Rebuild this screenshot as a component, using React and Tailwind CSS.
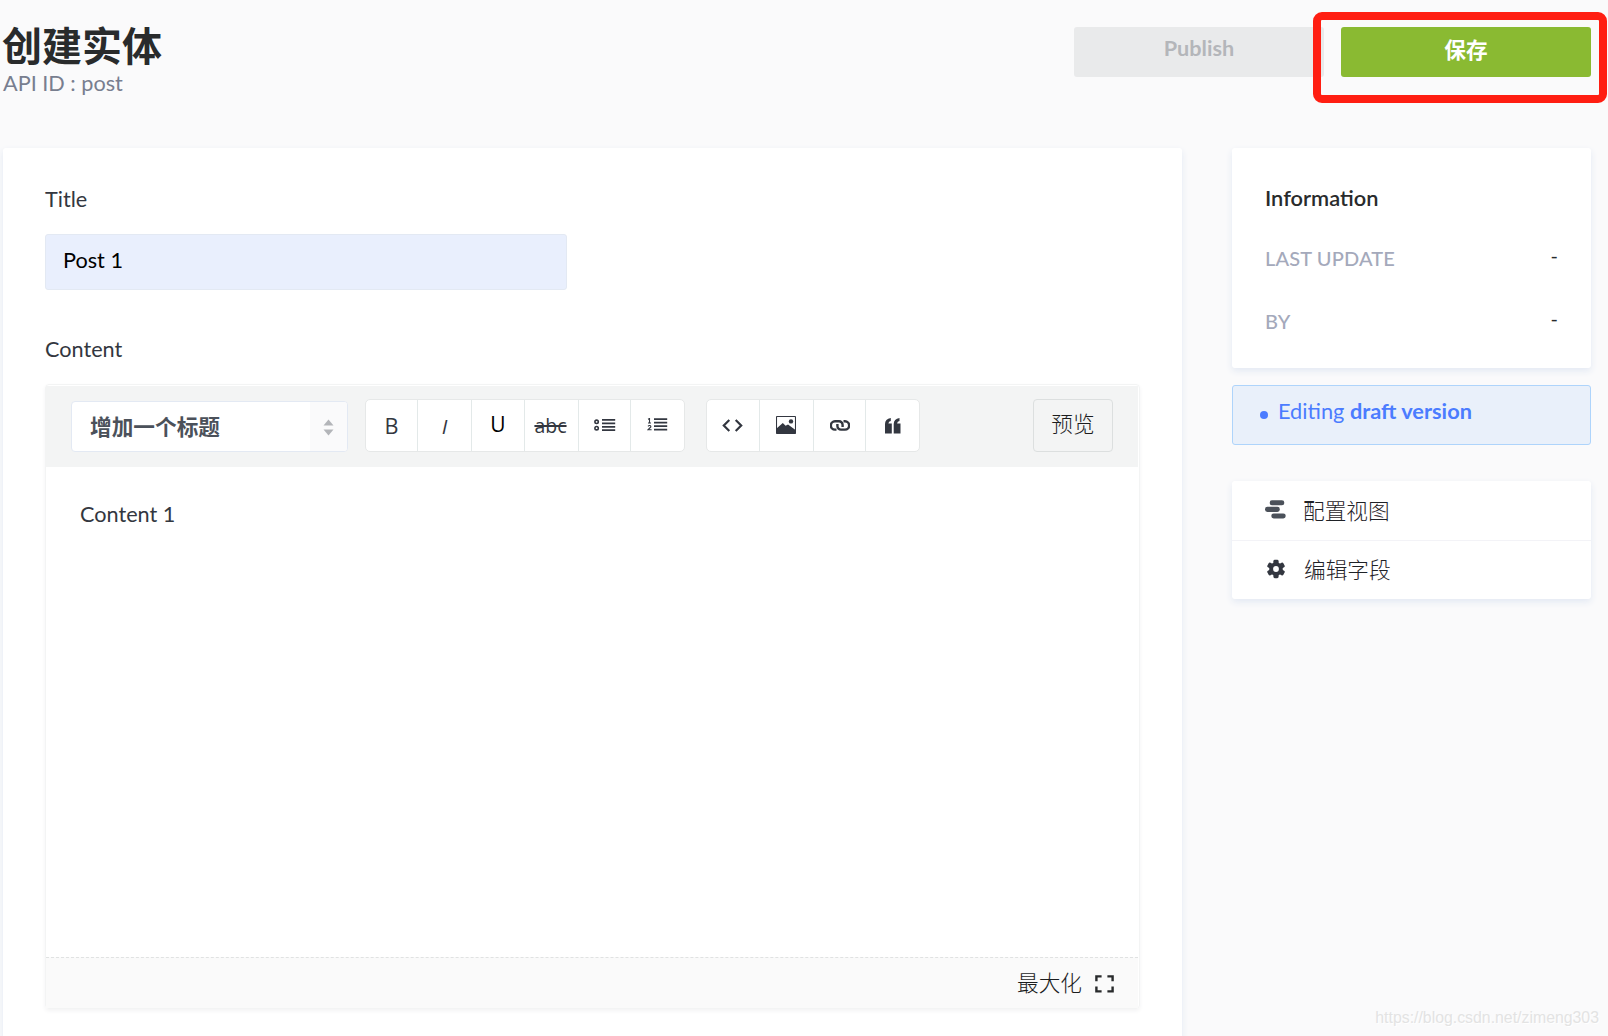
import React from "react";
import clsx from "clsx";

const TitleArrows = () => (
    <svg width="11" height="17" viewBox="0 0 11 17" fill="#b3b5b9">
        <path d="M5.5 0.5 10.5 6.5H0.5Z" />
        <path d="M0.5 10.5H10.5L5.5 16.5Z" />
    </svg>
);

const BulletList = () => (
    <svg className="mb-0.5" width="22" height="12" viewBox="0 0 22 12">
        <circle cx="2.6" cy="2.8" r="1.7" fill="none" stroke="#333740" strokeWidth="1.6" />
        <circle cx="2.6" cy="9.2" r="1.7" fill="none" stroke="#333740" strokeWidth="1.6" />
        <path d="M8 0.8H21.2M8 4.3H21.2M8 7.8H21.2M8 11.2H21.2" stroke="#333740" strokeWidth="1.8" />
    </svg>
);

const NumberList = () => (
    <svg className="mb-[3px]" width="21" height="13" viewBox="0 0 21 13">
        <path d="M1 1.2 2.5 0.5V5M1 5H4M1 8.3C2 7 4.2 7.4 3.8 9L1 11.8H4.6" fill="none" stroke="#333740" strokeWidth="1.1" />
        <path d="M7 1.2H20.2M7 4.7H20.2M7 8.2H20.2M7 11.6H20.2" stroke="#333740" strokeWidth="1.8" />
    </svg>
);

const CodeIcon = () => (
    <svg className="mb-px mr-px" width="21" height="13" viewBox="0 0 21 13" fill="none" stroke="#333740" strokeWidth="2.2">
        <path d="M7.3 1 1.8 6.5 7.3 12M13.7 1 19.2 6.5 13.7 12" />
    </svg>
);

const MediaIcon = () => (
    <svg className="mb-0.5 mr-px" width="20" height="18" viewBox="0 0 20 18">
        <rect x="0.5" y="0.5" width="19" height="17" rx="0.8" fill="#fff" stroke="#333740" strokeWidth="1.1" />
        <path d="M0.5 17.5V12.5L6.8 7 9.6 9.8 12 8.4 19.5 14V17.5Z" fill="#333740" />
        <circle cx="15" cy="5.4" r="2.2" fill="#333740" />
    </svg>
);

const LinkIcon = () => (
    <svg width="20" height="11" viewBox="0 0 20 11" fill="none" stroke="#333740" strokeWidth="2.4">
        <path d="M6.5 9.6H5A4.1 4.1 0 0 1 5 1.3H9A3.6 3.6 0 0 1 12.6 5V7" />
        <path d="M13.5 1.3H15A4.1 4.1 0 0 1 15 9.6H11A3.6 3.6 0 0 1 7.4 6V4" />
    </svg>
);

const QuoteIcon = () => (
    <svg width="16" height="16" viewBox="0 0 16 16" fill="#333740">
        <path d="M0 15.5V6Q0 1 5.8 0V3Q3.6 3.4 3.4 5.6H6.8V15.5Z" />
        <path d="M8.7 15.5V6Q8.7 1 14.5 0V3Q12.3 3.4 12.1 5.6H15.5V15.5Z" />
    </svg>
);

const ExpandIcon = () => (
    <svg width="19" height="18" viewBox="0 0 19 18" fill="none" stroke="#292b2c" strokeWidth="2.4">
        <path d="M1.4 6.2V1.4H6.6M12.4 1.4H17.6V6.2M17.6 11.6V16.4H12.4M6.6 16.4H1.4V11.6" />
    </svg>
);

const LayoutIcon = () => (
    <svg width="21" height="19" viewBox="0 0 21 19" fill="#4b515a">
        <rect x="4.7" y="0.3" width="14.6" height="5" rx="2.4" />
        <rect x="0" y="6.8" width="14.8" height="5.2" rx="2.4" />
        <rect x="6.3" y="13.4" width="14.4" height="5" rx="2.4" />
    </svg>
);

const GearIcon = () => (
    <svg width="18" height="20" viewBox="0 0 18 20">
        <g fill="#333740">
            <circle cx="9" cy="10" r="6.8" />
            <rect x="6.4" y="0.8" width="5.2" height="18.4" rx="1.4" />
            <rect x="6.4" y="0.8" width="5.2" height="18.4" rx="1.4" transform="rotate(60 9 10)" />
            <rect x="6.4" y="0.8" width="5.2" height="18.4" rx="1.4" transform="rotate(120 9 10)" />
        </g>
        <circle cx="9" cy="10" r="2.9" fill="#fff" />
    </svg>
);

const formatButtons = [
    { name: "bold", width: "w-[51px]", content: <span className="mt-0.5 font-medium font-['Open_Sans']">B</span> },
    { name: "italic", width: "w-[54px]", content: <span className="mt-0.5 font-medium italic text-[20.5px] font-['Open_Sans']">I</span> },
    { name: "underline", width: "w-[53px]", content: <span className="text-black -translate-y-px text-[21px] font-['Open_Sans']">U</span> },
    { name: "strike", width: "w-[54px]", content: <span className="line-through decoration-2 px-0.5 -translate-x-px text-[19.5px] font-['Open_Sans']">abc</span> },
    { name: "bullets", width: "w-[52px]", content: <BulletList /> },
    { name: "numbers", width: "w-[54px]", content: <NumberList /> },
];

const insertButtons = [
    { name: "code", width: "w-[52px]", content: <CodeIcon /> },
    { name: "media", width: "w-[54px]", content: <MediaIcon /> },
    { name: "link", width: "w-[52px]", content: <LinkIcon /> },
    { name: "quote", width: "w-[54px]", content: <QuoteIcon /> },
];

const ButtonGroup = ({ buttons, className }) => (
    <div className={clsx("flex h-[53px] rounded-[5px] border border-[#e6e8e8] bg-white overflow-hidden", className)}>
        {buttons.map((button, index) => (
            <button
                key={button.name}
                title={button.name}
                className={clsx(
                    "flex items-center justify-center text-[21.67px] text-[#333740]",
                    button.width,
                    index > 0 && "border-l border-[#e3e9e9]"
                )}
            >
                {button.content}
            </button>
        ))}
    </div>
);

const Header = () => (
    <header className="flex h-[148px] justify-between pl-[3px] pr-[17px]">
        <div className="pt-[23px]">
            <h1 className="-ml-px text-[40px] leading-[47px] font-bold text-[#292b2c]">创建实体</h1>
            <p className="text-[21.67px] leading-[26px] text-[#787e8f]">API ID : post</p>
        </div>
        <div className="flex gap-[17px] pt-[27px]">
            <button className="h-[50px] w-[250px] rounded-[3px] bg-[#e9eaeb] pb-[7px] text-[21.67px] font-bold text-[#b4b6ba]">
                Publish
            </button>
            <button className="h-[50px] w-[250px] rounded-[3px] bg-[#8aba32] pb-[3px] text-[21.67px] font-bold text-white">
                保存
            </button>
        </div>
    </header>
);

const Editor = () => (
    <div className="mt-[22px] flex h-[625px] w-[1095px] flex-col rounded-[4px] border border-[#f3f4f4] pt-px shadow-[0_2px_4px_#f3f3f4]">
        <div className="mr-px flex h-[81px] items-start bg-[#f3f4f4] pl-[25px] pr-[25px] pt-[13px]">
            <div className="mt-[2px] flex h-[51px] w-[277px] justify-between overflow-hidden rounded-[4px] border border-[#e3e9f3] bg-white">
                <span className="pl-[18px] text-[21.67px] leading-[51px] font-bold text-[#4b515a]">增加一个标题</span>
                <span className="flex w-[37px] items-center justify-center bg-[#fafafb] pt-[2px]">
                    <TitleArrows />
                </span>
            </div>
            <ButtonGroup buttons={formatButtons} className="ml-[17px]" />
            <ButtonGroup buttons={insertButtons} className="ml-[21px]" />
            <button className="ml-auto h-[53px] w-[80px] rounded-[4px] border border-[#dcdfdf] pb-[2px] text-[21.67px] font-light text-[#1c1d1e]">
                预览
            </button>
        </div>
        <div className="flex-1 px-[34px] pt-[34px] text-[21.67px] leading-[26px] text-[#333740]">Content 1</div>
        <div className="mr-px flex h-[51px] items-center justify-end border-t border-dashed border-[#e0e2e2] bg-[#fafafa] pr-[24px] text-[21.67px] font-light text-[#1c1d1e]">
            <span>最大化</span>
            <span className="ml-[13px] mt-px">
                <ExpandIcon />
            </span>
        </div>
    </div>
);

const InfoRow = ({ label, className }) => (
    <div className={clsx("flex justify-between leading-[26px]", className)}>
        <span className="text-[20px] font-medium tracking-[0.15px] text-[#a4a9bb]">{label}</span>
        <span className="-mt-[3px] text-[20px] text-[#292b2c]">-</span>
    </div>
);

const Sidebar = () => (
    <aside className="w-[359px]">
        <div className="h-[220px] rounded-[3px] bg-white px-[33px] pt-[37px] shadow-[0_3px_7px_#e3e9f3]">
            <h2 className="text-[21.8px] leading-[26px] font-semibold text-[#292b2c]">Information</h2>
            <InfoRow label="LAST UPDATE" className="mt-[34px]" />
            <InfoRow label="BY" className="mt-[37px]" />
        </div>
        <div className="mt-[17px] flex h-[60px] rounded-[3px] border border-[#aed4fb] bg-[#e9f0fa] pl-[27px] pt-[12px] text-[21.75px] leading-[26px] text-[#4b7cff]">
            <span className="mt-[13px] mr-[10px] h-[8px] w-[8px] rounded-full bg-[#4b7cff]" />
            <p>
                Editing <b>draft version</b>
            </p>
        </div>
        <ul className="mt-[36px] h-[118px] rounded-[3px] bg-white text-[21.67px] font-light text-[#1f2227] shadow-[0_3px_7px_#e3e9f3]">
            <li className="flex h-[60px] items-center border-b border-[#f3f3f7] pl-[33px] pt-[2px]">
                <span className="-mt-[4px] mr-[17px]">
                    <LayoutIcon />
                </span>
                配置视图
            </li>
            <li className="flex h-[58px] items-center pl-[35px] pt-px">
                <span className="mr-[19px] -mt-[4px]">
                    <GearIcon />
                </span>
                编辑字段
            </li>
        </ul>
    </aside>
);

const App = () => {
    return (
        <div className="relative h-[1036px] w-[1608px] overflow-hidden bg-[#fafafb] font-['Lato','Noto_Sans_CJK_SC',sans-serif]">
            <Header />
            <div className="flex gap-[50px] pl-[3px]">
                <main className="h-[920px] w-[1179px] rounded-[3px] bg-white px-[42px] pt-[38px] shadow-[0_3px_7px_#e3e9f3]">
                    <label className="block text-[21.67px] leading-[26px] text-[#333740]">Title</label>
                    <div className="mt-[22px] h-[56px] w-[522px] rounded-[3px] border border-[#e3e9f3] bg-[#e9effd] pl-[17px] pt-[12px] text-[21.67px] leading-[26px] text-black">
                        Post 1
                    </div>
                    <label className="mt-[46px] block text-[21.67px] leading-[26px] text-[#333740]">Content</label>
                    <Editor />
                </main>
                <Sidebar />
            </div>

            {/* Highlight around the save button */}
            <div className="absolute left-[1313px] top-[12px] h-[91px] w-[294px] rounded-[9px] border-8 border-[#ff1e12]" />

            <span className="absolute right-[9px] bottom-[8px] font-['Liberation_Sans',sans-serif] text-[15.85px] leading-[20px] text-[#e3e3e3] [text-shadow:1px_1px_0_#fff]">
                https://blog.csdn.net/zimeng303
            </span>
        </div>
    );
};

export default App;
